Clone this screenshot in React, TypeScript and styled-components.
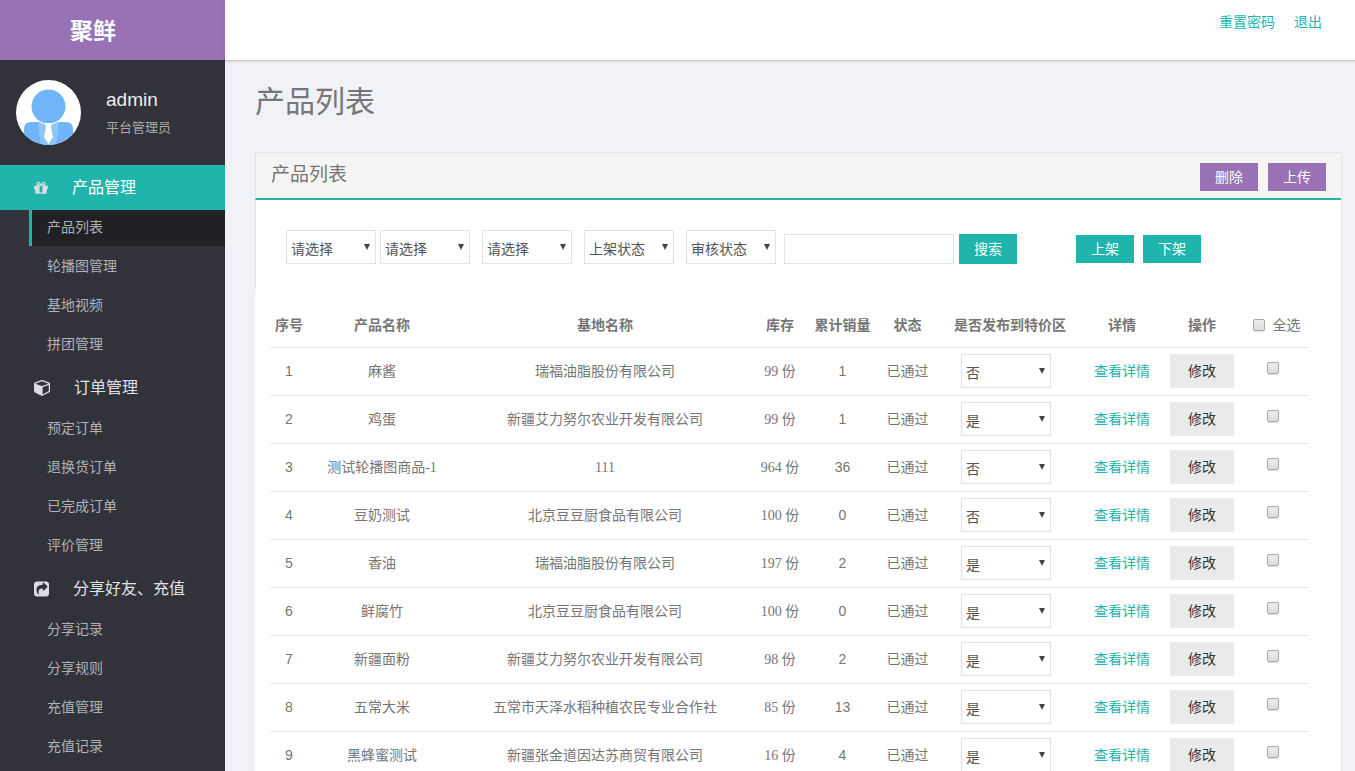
import React from 'react';
import styled, { createGlobalStyle, css } from 'styled-components';

const teal = '#1fb5ad';
const purple = '#9972b5';
const sans = '"Liberation Sans", "Noto Sans CJK SC", sans-serif';
const serif = '"Liberation Serif", "Noto Sans CJK SC", serif';

const GlobalStyle = createGlobalStyle`
  *, *::before, *::after { box-sizing: border-box; }
  body {
    margin: 0;
    background: #f1f2f7;
    color: #767676;
    font-family: ${sans};
    font-size: 14px;
    line-height: 20px;
  }
  h1, h2, p, ul { margin: 0; padding: 0; font-weight: 400; }
  ul { list-style: none; }
  a { color: ${teal}; text-decoration: none; }
  button, input, select { font: inherit; }
`;

const Shell = styled.div`
  display: flex;
  height: 100vh;
  overflow: hidden;
`;

const Sidebar = styled.aside`
  flex: 0 0 225px;
  background: #32323a;
`;

const Brand = styled.div`
  display: flex;
  align-items: center;
  height: 60px;
  padding: 2px 0 0 70px;
  background: ${purple};
  color: #fff;
  font-size: 23px;
  font-weight: 700;
`;

const Profile = styled.div`
  display: flex;
  gap: 25px;
  height: 105px;
  padding: 20px 16px;
`;

const Avatar = styled.svg`
  width: 65px;
  height: 65px;
  border-radius: 50%;
`;

const UserName = styled.p`
  padding-top: 6px;
  color: #eee;
  font-size: 19px;
  line-height: 28px;
`;

const UserRole = styled.p`
  color: #aaa;
  font-size: 13px;
  line-height: 28px;
`;

const MenuLink = styled.a<{ $active?: boolean }>`
  display: flex;
  align-items: center;
  gap: 24px;
  height: 45px;
  padding: 0 0 ${(p) => (p.$active ? 0 : 2)}px 34px;
  background: ${(p) => (p.$active ? teal : 'transparent')};
  color: ${(p) => (p.$active ? '#fff' : '#e0e1e7')};
  font-size: 16px;
`;

const MenuIcon = styled.svg`
  height: 16px;
  fill: #dcdde3;
`;

const SubLink = styled.a<{ $active?: boolean }>`
  display: flex;
  align-items: center;
  height: 36px;
  margin: 0 0 3px 29px;
  padding: 0 0 2px 15px;
  border-left: 3px solid ${(p) => (p.$active ? teal : 'transparent')};
  background: ${(p) => (p.$active ? '#202025' : 'transparent')};
  color: #aeb2b7;
`;

const Main = styled.main`
  flex: 1;
  min-width: 0;
`;

const TopBar = styled.header`
  display: flex;
  justify-content: flex-end;
  gap: 19px;
  height: 61px;
  padding: 12px 33px;
  border-bottom: 1px solid #c9c9c9;
  background: #fff;
  box-shadow: 0 1px 3px rgba(0, 0, 0, 0.1);
`;

const PageTitle = styled.h1`
  padding: 21px 30px 30px;
  font-size: 30px;
  line-height: 40px;
`;

const Panel = styled.section`
  margin: 0 13px 0 30px;
  border: solid #e5e5e9;
  border-width: 1px 1px 0 0;
  background: #fff;
`;

const PanelHead = styled.div`
  display: flex;
  align-items: flex-start;
  justify-content: space-between;
  height: 47px;
  padding: 10px 15px;
  border-left: 1px solid #e5e5e9;
  border-bottom: 2px solid ${teal};
  background: #f5f5f5;
`;

const PanelTitle = styled.h2`
  font-size: 19px;
  line-height: 24px;
`;

const Row = styled.div<{ $gap: number }>`
  display: flex;
  align-items: flex-end;
  gap: ${(p) => p.$gap}px;
`;

const Button = styled.button<{ $tone: string; $tall?: boolean }>`
  width: 58px;
  height: ${(p) => (p.$tall ? 30 : 28)}px;
  padding: 0;
  border: 0;
  background: ${(p) => p.$tone};
  color: #fff;
  cursor: pointer;
`;

const Filters = styled.form`
  display: flex;
  align-items: flex-end;
  gap: 59px;
  padding: 30px 30px 25px;
  border-left: 1px solid #e5e5e9;
`;

const BulkActions = styled(Row)`
  padding-bottom: 1px;
`;

const SelectWrap = styled.span`
  position: relative;
  display: inline-block;
  vertical-align: top;

  &::after {
    content: '';
    position: absolute;
    top: 14px;
    right: 6px;
    border: solid transparent;
    border-width: 6px 3px 0;
    border-top-color: #444;
    pointer-events: none;
  }
`;

const NativeSelect = styled.select`
  appearance: none;
  display: block;
  width: 90px;
  height: 34px;
  padding: 3px 4px 0;
  border: 1px solid #e2e2e4;
  border-radius: 0;
  background: #fff;
  color: #555;
`;

const SearchInput = styled.input`
  width: 170px;
  height: 30px;
  padding: 0 6px;
  border: 1px solid #e2e2e4;
`;

const TableArea = styled.div`
  padding: 12px 32px 0 15px;
`;

const Table = styled.table`
  width: 100%;
  table-layout: fixed;
  border-collapse: separate;
  border-spacing: 0;
`;

const HeadCell = styled.th<{ $plain?: boolean }>`
  height: 46px;
  padding: ${(p) => (p.$plain ? 2 : 1)}px 0 0;
  font-weight: ${(p) => (p.$plain ? 400 : 700)};
  white-space: nowrap;
`;

const Cell = styled.td<{ $serif?: boolean }>`
  height: 48px;
  padding: 6px 0 7px;
  border-top: 1px solid #e7e7e7;
  text-align: center;
  white-space: nowrap;
  ${(p) => p.$serif && css`
    padding: 7px 0 6px;
    font-family: ${serif};
  `}
`;

const PublishCell = styled(Cell)`
  padding-right: 8px;
`;

const CheckCell = styled(Cell)`
  padding: 14px 8px 0 0;
  vertical-align: top;
`;

const CheckLabel = styled.label`
  display: inline-flex;
  align-items: center;
  gap: 8px;
`;

const CheckBox = styled.input`
  appearance: none;
  display: inline-block;
  width: 12px;
  height: 12px;
  margin: 0;
  border: 1px solid #a8a8a8;
  border-radius: 2px;
  background: linear-gradient(#ededed, #dcdcdc);
  box-shadow: 0 1px 1px rgba(0, 0, 0, 0.12);
  vertical-align: top;

  &:checked { background: ${teal}; }
`;

const EditButton = styled.button`
  display: block;
  width: 64px;
  height: 34px;
  margin: 0 auto;
  padding: 0;
  border: 0;
  background: #eaeaea;
  color: #333;
  cursor: pointer;
`;

type Group = { title: string; icon: string; box: string; width: number; items: string[] };

const groups: Group[] = [
  {
    title: '产品管理',
    box: '0 0 1536 1792',
    width: 14,
    icon: 'M928 1356v-716h-320v716q0 25 18 38.5t46 13.5h192q28 0 46-13.5t18-38.5zm-456-844h195l-126-161q-26-31-69-31-40 0-68 28t-28 68 28 68 68 28zm688-96q0-40-28-68t-68-28q-43 0-69 31l-125 161h194q40 0 68-28t28-68zm376 256v320q0 14-9 23t-23 9h-96v416q0 40-28 68t-68 28h-1088q-40 0-68-28t-28-68v-416h-96q-14 0-23-9t-9-23v-320q0-14 9-23t23-9h440q-93 0-158.5-65.5t-65.5-158.5 65.5-158.5 158.5-65.5q107 0 168 77l128 165 128-165q61-77 168-77 93 0 158.5 65.5t65.5 158.5-65.5 158.5-158.5 65.5h440q14 0 23 9t9 23z',
    items: ['产品列表', '轮播图管理', '基地视频', '拼团管理'],
  },
  {
    title: '订单管理',
    box: '0 128 1664 1664',
    width: 16,
    icon: 'M896 1629l640-349v-636l-640 233v752zm-64-865l698-254-698-254-698 254zm832-252v768q0 35-18 65t-49 47l-704 384q-28 16-61 16t-61-16l-704-384q-31-17-49-47t-18-65v-768q0-40 23-73t61-47l704-256q22-8 44-8t44 8l704 256q38 14 61 47t23 73z',
    items: ['预定订单', '退换货订单', '已完成订单', '评价管理'],
  },
  {
    title: '分享好友、充值',
    box: '0 0 1536 1536',
    width: 15,
    icon: 'M1005 931l352-352q19-19 19-45t-19-45l-352-352q-30-31-69-14-40 17-40 59v160q-119 0-216 19.5t-162.5 51-114 79-76.5 95.5-44.5 109-21.5 111.5-5 110.5q0 181 167 404 11 12 25 12 7 0 13-3 22-9 19-33-44-354 62-473 46-52 130-75.5t224-23.5v160q0 42 40 59 12 5 24 5 26 0 45-19zm531-643v960q0 119-84.5 203.5t-203.5 84.5h-960q-119 0-203.5-84.5t-84.5-203.5v-960q0-119 84.5-203.5t203.5-84.5h960q119 0 203.5 84.5t84.5 203.5z',
    items: ['分享记录', '分享规则', '充值管理', '充值记录'],
  },
];

const products = [
  { name: '麻酱', base: '瑞福油脂股份有限公司', stock: 99, sold: 1, special: '否' },
  { name: '鸡蛋', base: '新疆艾力努尔农业开发有限公司', stock: 99, sold: 1, special: '是' },
  { name: '测试轮播图商品-1', base: '111', stock: 964, sold: 36, special: '否' },
  { name: '豆奶测试', base: '北京豆豆厨食品有限公司', stock: 100, sold: 0, special: '否' },
  { name: '香油', base: '瑞福油脂股份有限公司', stock: 197, sold: 2, special: '是' },
  { name: '鲜腐竹', base: '北京豆豆厨食品有限公司', stock: 100, sold: 0, special: '是' },
  { name: '新疆面粉', base: '新疆艾力努尔农业开发有限公司', stock: 98, sold: 2, special: '是' },
  { name: '五常大米', base: '五常市天泽水稻种植农民专业合作社', stock: 85, sold: 13, special: '是' },
  { name: '黑蜂蜜测试', base: '新疆张金道因达苏商贸有限公司', stock: 16, sold: 4, special: '是' },
];

const headings = ['序号', '产品名称', '基地名称', '库存', '累计销量', '状态', '是否发布到特价区', '详情', '操作'];
const columnWidths = [38, 148, undefined, 52, 73, 57, 148, 76, 84, 65];

function Select({ label, options, value }: { label: string; options: string[]; value?: string }) {
  return (
    <SelectWrap>
      <NativeSelect aria-label={label} defaultValue={value ?? options[0]}>
        {options.map((o) => (
          <option key={o}>{o}</option>
        ))}
      </NativeSelect>
    </SelectWrap>
  );
}

function UserAvatar() {
  return (
    <Avatar viewBox="0 0 65 65" aria-hidden="true">
      <rect width="65" height="65" fill="#fff" />
      <path d="M8 65V49q0-7 7-7h35q7 0 7 7v16z" fill="#70b5f9" />
      <path d="M22 42h21l-3 23H25z" fill="#8ec5fb" />
      <circle cx="32.5" cy="26.5" r="18" fill="#fff" />
      <circle cx="32.5" cy="26.5" r="17" fill="#70b5f9" />
      <path d="M28.500 43h8l-1.500 4 2 10-4.500 7-4.500-7 2-10z" fill="#fff" />
    </Avatar>
  );
}

export default function App() {
  return (
    <>
      <GlobalStyle />
      <Shell>
        <Sidebar>
          <Brand>聚鲜</Brand>
          <Profile>
            <UserAvatar />
            <div>
              <UserName>admin</UserName>
              <UserRole>平台管理员</UserRole>
            </div>
          </Profile>
          <nav>
            {groups.map((g, gi) => (
              <React.Fragment key={g.title}>
                <MenuLink href="#" $active={gi === 0}>
                  <MenuIcon viewBox={g.box} width={g.width} aria-hidden="true">
                    <path d={g.icon} />
                  </MenuIcon>
                  {g.title}
                </MenuLink>
                <ul>
                  {g.items.map((item, i) => (
                    <li key={item}>
                      <SubLink href="#" $active={gi === 0 && i === 0}>{item}</SubLink>
                    </li>
                  ))}
                </ul>
              </React.Fragment>
            ))}
          </nav>
        </Sidebar>
        <Main>
          <TopBar>
            <a href="#">重置密码</a>
            <a href="#">退出</a>
          </TopBar>
          <PageTitle>产品列表</PageTitle>
          <Panel>
            <PanelHead>
              <PanelTitle>产品列表</PanelTitle>
              <Row $gap={10}>
                <Button type="button" $tone={purple}>删除</Button>
                <Button type="button" $tone={purple}>上传</Button>
              </Row>
            </PanelHead>
            <Filters onSubmit={(e) => e.preventDefault()}>
              <Row $gap={8}>
                <Row $gap={12}>
                  <Row $gap={4}>
                    <Select label="省份" options={['请选择']} />
                    <Select label="城市" options={['请选择']} />
                  </Row>
                  <Select label="分类" options={['请选择']} />
                  <Select label="上架状态" options={['上架状态']} />
                  <Select label="审核状态" options={['审核状态']} />
                </Row>
                <Row $gap={5}>
                  <SearchInput type="text" aria-label="关键词" />
                  <Button type="submit" $tone={teal} $tall>搜索</Button>
                </Row>
              </Row>
              <BulkActions $gap={9}>
                <Button type="button" $tone={teal}>上架</Button>
                <Button type="button" $tone={teal}>下架</Button>
              </BulkActions>
            </Filters>
            <TableArea>
              <Table>
                <colgroup>
                  {columnWidths.map((w, i) => (
                    <col key={i} width={w} />
                  ))}
                </colgroup>
                <thead>
                  <tr>
                    {headings.map((h) => (
                      <HeadCell key={h} scope="col">{h}</HeadCell>
                    ))}
                    <HeadCell scope="col" $plain>
                      <CheckLabel>
                        <CheckBox type="checkbox" />
                        全选
                      </CheckLabel>
                    </HeadCell>
                  </tr>
                </thead>
                <tbody>
                  {products.map((p, i) => (
                    <tr key={i}>
                      <Cell>{i + 1}</Cell>
                      <Cell $serif>{p.name}</Cell>
                      <Cell $serif>{p.base}</Cell>
                      <Cell $serif>{p.stock} 份</Cell>
                      <Cell>{p.sold}</Cell>
                      <Cell>已通过</Cell>
                      <PublishCell>
                        <Select label="是否发布到特价区" options={['是', '否']} value={p.special} />
                      </PublishCell>
                      <Cell><a href="#">查看详情</a></Cell>
                      <Cell><EditButton type="button">修改</EditButton></Cell>
                      <CheckCell>
                        <CheckBox type="checkbox" aria-label={`选择${p.name}`} />
                      </CheckCell>
                    </tr>
                  ))}
                </tbody>
              </Table>
            </TableArea>
          </Panel>
        </Main>
      </Shell>
    </>
  );
}
